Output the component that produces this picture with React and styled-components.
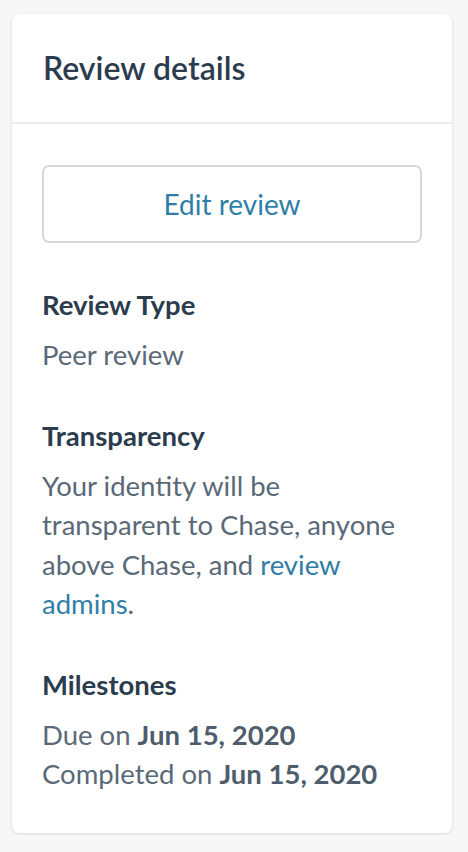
import React from 'react';
import styled, { createGlobalStyle } from 'styled-components';

const GlobalStyle = createGlobalStyle`
  html, body {
    margin: 0;
    padding: 0;
    background: #f7f7f7;
  }
  body {
    font-family: Lato, "Noto Sans", sans-serif;
    -webkit-font-smoothing: antialiased;
  }
`;

const Page = styled.div`
  padding: 14px 16px 18px 12px;
`;

const Card = styled.section`
  background: #fff;
  border-radius: 7px;
  box-shadow: 0 1px 3px rgba(0, 0, 0, 0.12), 0 0 1px rgba(0, 0, 0, 0.06);
  overflow: hidden;
`;

const Header = styled.header`
  padding: 34px 31px;
  border-bottom: 2px solid #ececec;
`;

const Title = styled.h2`
  margin: 0;
  font-size: 32px;
  line-height: 40px;
  font-weight: 600;
  color: #2b3c4e;
`;

const Body = styled.div`
  padding: 41px 30px 39px;
`;

const EditButton = styled.button`
  display: block;
  width: 100%;
  height: 78px;
  margin-bottom: 42px;
  background: #fff;
  border: 2px solid #d5d9de;
  border-radius: 7px;
  font-family: inherit;
  font-size: 28px;
  color: #2f7ea7;
  cursor: pointer;
`;

const Section = styled.div`
  & + & {
    margin-top: 41px;
  }
`;

const Label = styled.h3`
  margin: 0 0 10px;
  font-size: 27.5px;
  line-height: 40px;
  font-weight: 700;
  color: #2b3c4e;
`;

const Text = styled.p`
  margin: 0;
  font-size: 27.5px;
  line-height: 39.5px;
  color: #5a6978;
`;

const Link = styled.a`
  color: #2f7ea7;
  text-decoration: none;
`;

const Strong = styled.strong`
  font-weight: 700;
  color: #4e5d6c;
`;

export default function App() {
  return (
    <Page>
      <GlobalStyle />
      <Card>
        <Header>
          <Title>Review details</Title>
        </Header>
        <Body>
          <EditButton>Edit review</EditButton>
          <Section>
            <Label>Review Type</Label>
            <Text>Peer review</Text>
          </Section>
          <Section>
            <Label>Transparency</Label>
            <Text>
              Your identity will be transparent to Chase, anyone above Chase, and{' '}
              <Link href="#">review admins</Link>.
            </Text>
          </Section>
          <Section>
            <Label>Milestones</Label>
            <Text>
              Due on <Strong>Jun 15, 2020</Strong>
            </Text>
            <Text>
              Completed on <Strong>Jun 15, 2020</Strong>
            </Text>
          </Section>
        </Body>
      </Card>
    </Page>
  );
}
